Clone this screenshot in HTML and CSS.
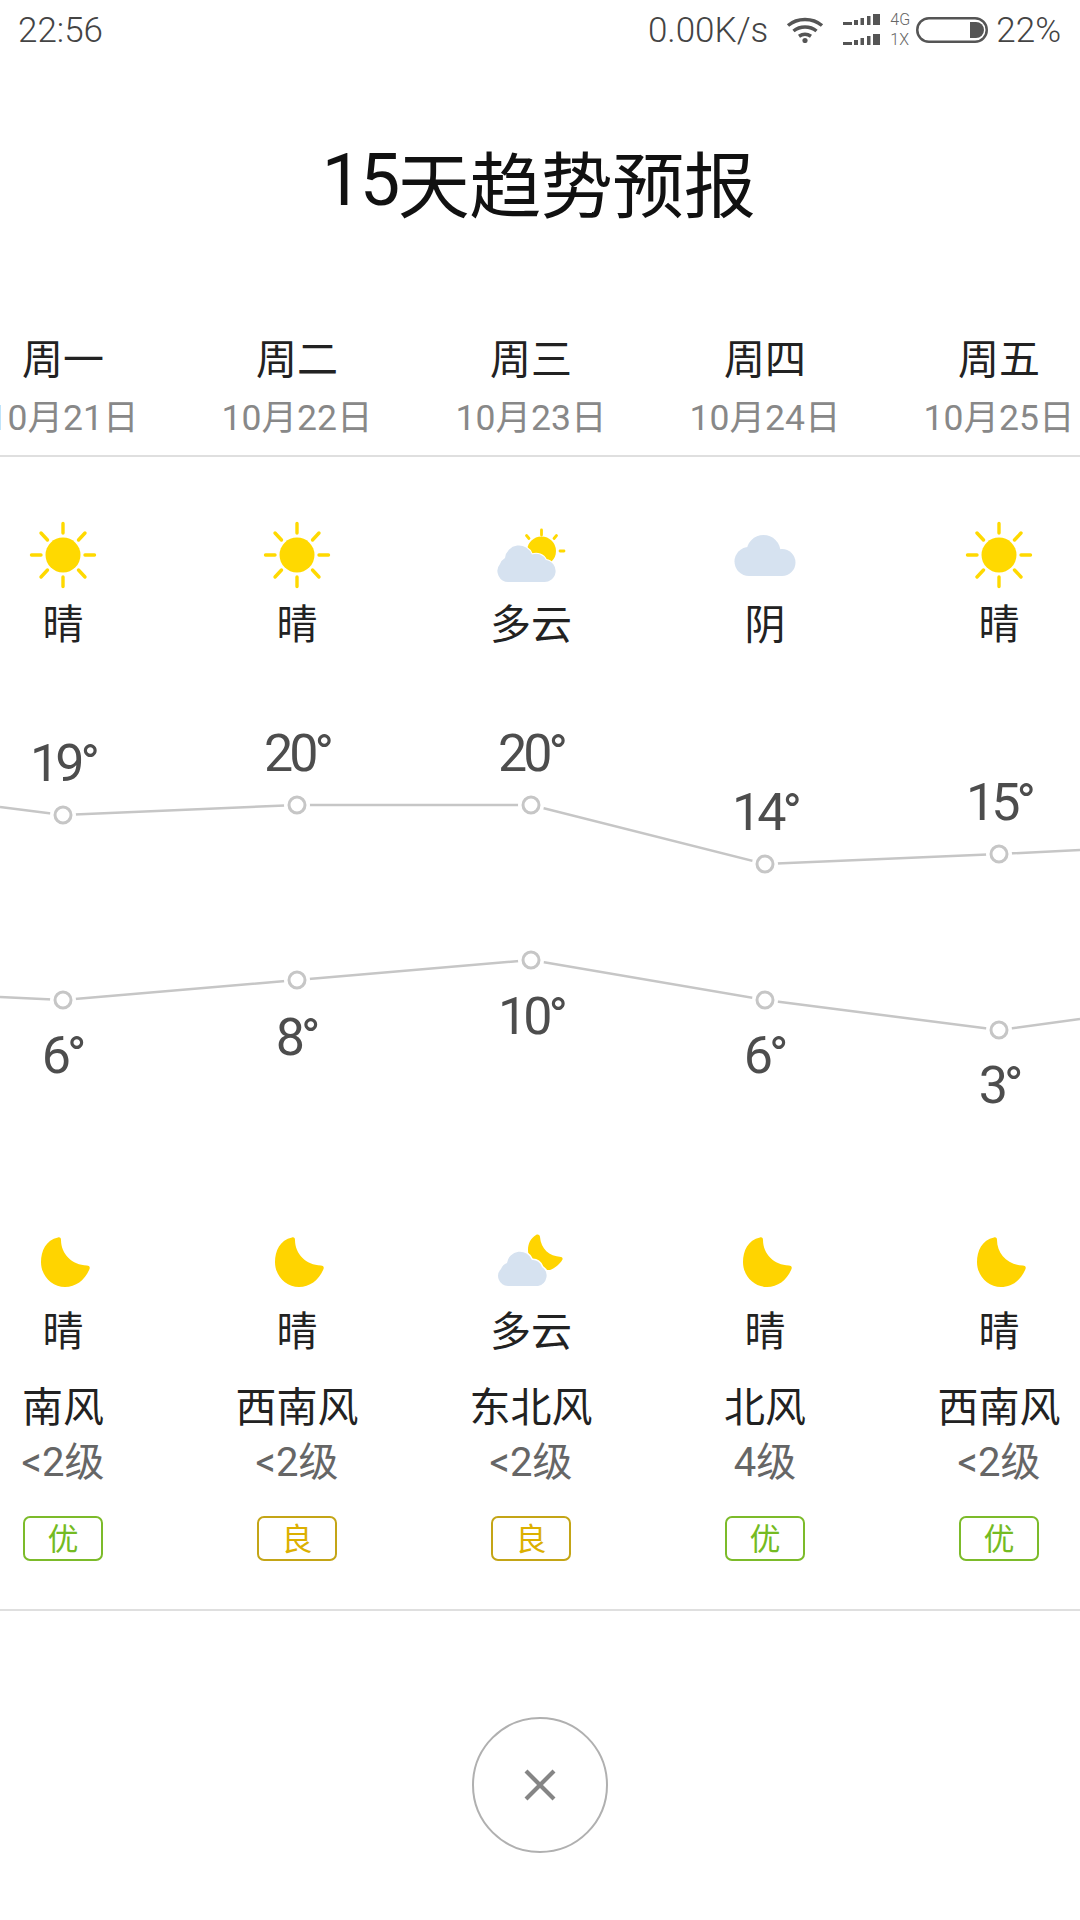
FILE: index.html
```html
<!DOCTYPE html>
<html lang="zh">
<head>
<meta charset="utf-8">
<title>15天趋势预报</title>
<link rel="stylesheet" href="styles.css">
</head>
<body>
<svg class="defs" width="0" height="0" aria-hidden="true">
  <defs>
    <symbol id="sun" viewBox="0 0 70 70">
      <circle cx="35" cy="35" r="17.5" fill="#ffd900"/>
      <g stroke="#ffd900" stroke-width="3.4" stroke-linecap="round">
        <path d="M35 3.5V13M35 57V66.5M3.5 35H13M57 35H66.5M13 13L19.5 20M57 13L50.5 20M13 57L19.5 50M57 57L50.5 50"/>
      </g>
    </symbol>
    <symbol id="cloudsun" viewBox="0 0 70 70">
      <circle cx="45.5" cy="31" r="14.5" fill="#ffd900"/>
      <g stroke="#ffd900" stroke-width="2.8" stroke-linecap="round">
        <path d="M45.5 10V15M30.5 15.5L33 18.5M60.500 15.500L58 18.500M64 31H68"/>
      </g>
      <path d="M13 62A11 11 0 0 1 4 44A12 12 0 0 1 9 38A14 14 0 0 1 36 34.500A11 11 0 0 1 50 40A11 11 0 0 1 47 62Z" fill="#d6e2f0" stroke="#fff" stroke-width="2" paint-order="stroke"/>
    </symbol>
    <symbol id="cloud" viewBox="0 0 70 70">
      <g fill="#d6e2f0">
        <circle cx="33.500" cy="32" r="17"/>
        <circle cx="19" cy="41.500" r="14.500"/>
        <circle cx="52" cy="42.500" r="13.500"/>
        <rect x="19" y="32" width="33" height="24"/>
      </g>
    </symbol>
    <symbol id="moon" viewBox="0 0 70 70">
      <path d="M30 10.500C18 13 13 24 13 35C13 49 24 60 37 60C48 60 57 53 61.500 42C62.500 39.500 60.500 38.500 59 38.500C44 38 33 27 33 13C33 11 32 10 30 10.500Z" fill="#ffd400"/>
    </symbol>
    <symbol id="cloudmoon" viewBox="0 0 70 70">
      <path d="M40 8C35 11 32 16 32 23C32 33 41 43 54 43C59 41 64 37 66.500 32.500C67 31 66 30 65 30C53 29 45 22 44 10C44 8 42 7 40 8Z" fill="#ffd400"/>
      <path d="M12 59A10 10 0 0 1 5 42A10.500 10.500 0 0 1 11 36A13 13 0 0 1 36 33A9.500 9.500 0 0 1 46 40A10.500 10.500 0 0 1 42 59Z" fill="#d6e2f0" stroke="#fff" stroke-width="3" paint-order="stroke"/>
    </symbol>
  </defs>
</svg>

<div class="page">
  <header class="status">
    <span class="time">22:56</span>
    <div class="status-right">
      <span class="speed">0.00K/s</span>
      <svg class="wifi" width="38" height="26" viewBox="0 0 38 26">
        <path d="M2 8.500C11.500 0.500 26.500 0.500 36 8.500M7.500 14C14 8.700 24 8.700 30.500 14M13 19.300C16.800 16.700 21.200 16.700 25 19.300" fill="none" stroke="#555" stroke-width="3.500"/>
        <circle cx="19" cy="23.500" r="2.600" fill="#555"/>
      </svg>
      <div class="network">
        <svg class="signal" width="38" height="32" viewBox="0 0 38 32">
          <path fill="#555" d="M0 8h9v3H0zM11 6h4v5h-4zM17.500 4h3.500v7h-3.500zM24 2h3.500v9H24zM30 0h7v11h-7zM0 28h9v3H0zM11 26h4v5h-4zM17.500 24h3.500v7h-3.500zM24 22h3.500v9H24zM30 20h7v11h-7z"/>
        </svg>
        <div class="net-labels"><span>4G</span><span>1X</span></div>
      </div>
      <svg class="battery" width="72" height="26" viewBox="0 0 72 26">
        <rect x="1.250" y="1.250" width="69.500" height="23.500" rx="11.700" fill="none" stroke="#555" stroke-width="2.500"/>
        <path d="M54 5H60A8 8 0 0 1 60 21H54Z" fill="#555"/>
      </svg>
      <span class="percent">22%</span>
    </div>
  </header>

  <h1 class="title"><span class="title-num">15</span>天趋势预报</h1>

  <section class="heads">
    <div class="strip">
      <div class="head"><div class="day">周一</div><div class="date">10月21日</div></div>
      <div class="head"><div class="day">周二</div><div class="date">10月22日</div></div>
      <div class="head"><div class="day">周三</div><div class="date">10月23日</div></div>
      <div class="head"><div class="day">周四</div><div class="date">10月24日</div></div>
      <div class="head"><div class="day">周五</div><div class="date">10月25日</div></div>
    </div>
  </section>

  <section class="day-weather">
    <div class="strip">
      <div class="wx"><svg class="wx-icon"><use href="#sun"/></svg><div class="wx-text">晴</div></div>
      <div class="wx"><svg class="wx-icon"><use href="#sun"/></svg><div class="wx-text">晴</div></div>
      <div class="wx"><svg class="wx-icon"><use href="#cloudsun"/></svg><div class="wx-text">多云</div></div>
      <div class="wx"><svg class="wx-icon"><use href="#cloud"/></svg><div class="wx-text">阴</div></div>
      <div class="wx"><svg class="wx-icon"><use href="#sun"/></svg><div class="wx-text">晴</div></div>
    </div>
  </section>

  <section class="chart">
    <svg class="chart-lines" width="1080" height="577" viewBox="0 2 1080 577">
      <g fill="none" stroke="#c6c6c6" stroke-width="2.500">
        <polyline points="0,159 63,167 297,157 531,157 765,216 999,206 1080,202"/>
        <polyline points="0,349 63,352 297,332 531,312 765,352 999,382 1080,371"/>
      </g>
      <g fill="#fff" stroke="#fff" stroke-width="6">
        <circle cx="63" cy="167" r="10"/><circle cx="297" cy="157" r="10"/><circle cx="531" cy="157" r="10"/><circle cx="765" cy="216" r="10"/><circle cx="999" cy="206" r="10"/>
        <circle cx="63" cy="352" r="10"/><circle cx="297" cy="332" r="10"/><circle cx="531" cy="312" r="10"/><circle cx="765" cy="352" r="10"/><circle cx="999" cy="382" r="10"/>
      </g>
      <g fill="#fff" stroke="#c6c6c6" stroke-width="3">
        <circle cx="63" cy="167" r="8"/><circle cx="297" cy="157" r="8"/><circle cx="531" cy="157" r="8"/><circle cx="765" cy="216" r="8"/><circle cx="999" cy="206" r="8"/>
        <circle cx="63" cy="352" r="8"/><circle cx="297" cy="332" r="8"/><circle cx="531" cy="312" r="8"/><circle cx="765" cy="352" r="8"/><circle cx="999" cy="382" r="8"/>
      </g>
    </svg>
    <span class="temp" style="left:63px;top:84px">19°</span>
    <span class="temp" style="left:297px;top:74px">20°</span>
    <span class="temp" style="left:531px;top:74px">20°</span>
    <span class="temp" style="left:765px;top:133px">14°</span>
    <span class="temp" style="left:999px;top:123px">15°</span>
    <span class="temp" style="left:62px;top:376px">6°</span>
    <span class="temp" style="left:296px;top:358px">8°</span>
    <span class="temp" style="left:531px;top:337px">10°</span>
    <span class="temp" style="left:764px;top:376px">6°</span>
    <span class="temp" style="left:999px;top:406px">3°</span>
  </section>

  <section class="night-weather">
    <div class="strip">
      <div class="wx"><svg class="wx-icon"><use href="#moon"/></svg><div class="wx-text">晴</div></div>
      <div class="wx"><svg class="wx-icon"><use href="#moon"/></svg><div class="wx-text">晴</div></div>
      <div class="wx"><svg class="wx-icon"><use href="#cloudmoon"/></svg><div class="wx-text">多云</div></div>
      <div class="wx"><svg class="wx-icon"><use href="#moon"/></svg><div class="wx-text">晴</div></div>
      <div class="wx"><svg class="wx-icon"><use href="#moon"/></svg><div class="wx-text">晴</div></div>
    </div>
  </section>

  <section class="winds">
    <div class="strip">
      <div class="wind"><div class="wind-dir">南风</div><div class="wind-level">&lt;2级</div><div class="aqi aqi-good">优</div></div>
      <div class="wind"><div class="wind-dir">西南风</div><div class="wind-level">&lt;2级</div><div class="aqi aqi-fair">良</div></div>
      <div class="wind"><div class="wind-dir">东北风</div><div class="wind-level">&lt;2级</div><div class="aqi aqi-fair">良</div></div>
      <div class="wind"><div class="wind-dir">北风</div><div class="wind-level">4级</div><div class="aqi aqi-good">优</div></div>
      <div class="wind"><div class="wind-dir">西南风</div><div class="wind-level">&lt;2级</div><div class="aqi aqi-good">优</div></div>
    </div>
  </section>

  <footer class="foot">
    <button class="close" type="button" aria-label="关闭">
      <svg width="32" height="32" viewBox="0 0 32 32"><path d="M2 2L30 30M30 2L2 30" stroke="#858585" stroke-width="4.200" fill="none"/></svg>
    </button>
  </footer>
</div>
</body>
</html>
```
FILE: styles.css
```css
* { box-sizing: border-box; }
html, body { margin: 0; padding: 0; background: #fff; }
body {
  width: 1080px;
  height: 1920px;
  overflow: hidden;
  font-family: Roboto, "Noto Sans CJK SC", sans-serif;
  color: #222;
}
.defs { display: block; height: 0; }
.page { width: 1080px; height: 1920px; display: flex; flex-direction: column; overflow: hidden; }

.status {
  height: 60px;
  flex: none;
  padding: 0 19px 0 18px;
  display: flex;
  align-items: center;
  justify-content: space-between;
  font-size: 35px;
  font-weight: 300;
  color: #444;
}
.status-right { display: flex; align-items: center; }
.speed { margin-right: 18px; }
.wifi { margin-right: 19px; }
.network { display: flex; align-items: center; margin-right: 2px; }
.signal { margin-right: 9px; }
.net-labels { display: flex; flex-direction: column; font-size: 16px; line-height: 20px; color: #666; width: 24px; }
.battery { margin-right: 8px; }

.title {
  margin: 0;
  height: 250px;
  padding: 0 3px 10px 0;
  flex: none;
  display: flex;
  align-items: center;
  justify-content: center;
  font-size: 72px;
  font-weight: 400;
  letter-spacing: -0.5px;
  color: #111;
}
.title-num { letter-spacing: -2.5px; }

.strip { display: flex; margin-left: -54px; width: 1170px; }
.strip > * { flex: 0 0 234px; display: flex; flex-direction: column; align-items: center; }

.heads { padding: 20px 0 12px; border-bottom: 2px solid #dfdfdf; flex: none; height: 147px; }
.day { font-size: 41px; line-height: 60px; color: #222; }
.date { font-size: 35.5px; line-height: 56px; color: #888; white-space: nowrap; }

.day-weather { margin-top: 63px; flex: none; }
.wx-icon { width: 70px; height: 70px; display: block; }
.wx-text { font-size: 41px; line-height: 50px; margin-top: 10px; color: #222; }

.chart { position: relative; height: 577px; flex: none; }
.chart-lines { display: block; }
.temp {
  position: absolute;
  transform: translateX(-50%);
  font-size: 52px;
  line-height: 60px;
  letter-spacing: -4px;
  color: #4d4d4d;
}

.night-weather { flex: none; }
.winds { margin-top: 26px; padding-bottom: 48px; border-bottom: 2px solid #dfdfdf; flex: none; }
.wind-dir { font-size: 41px; line-height: 50px; color: #222; }
.wind-level { font-size: 40px; line-height: 50px; margin-top: 5px; color: #666; }
.aqi {
  width: 80px;
  height: 45px;
  margin-top: 28px;
  border: 2px solid;
  border-radius: 7px;
  font-size: 31px;
  line-height: 43px;
  text-align: center;
}
.aqi-good { border-color: #7cbb2a; color: #74bb22; }
.aqi-fair { border-color: #c4a516; color: #dcb000; }

.foot { display: flex; justify-content: center; padding-top: 106px; flex: none; }
.close {
  width: 136px;
  height: 136px;
  padding: 0;
  border: 2px solid #b0b0b0;
  border-radius: 50%;
  background: #fff;
  display: flex;
  align-items: center;
  justify-content: center;
}
```
